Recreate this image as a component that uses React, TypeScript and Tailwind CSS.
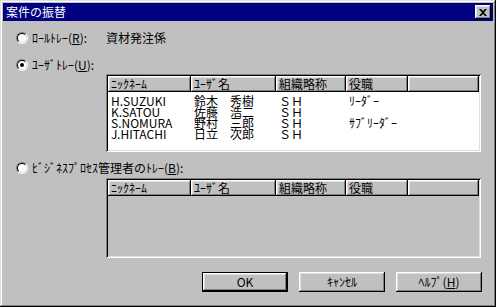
import { ReactNode } from 'react'

const raised =
  'shadow-[inset_-1px_-1px_#000,inset_1px_1px_#fff,inset_-2px_-2px_#808080,inset_2px_2px_#dfdfdf]'
const sunken =
  'shadow-[inset_1px_1px_#808080,inset_-1px_-1px_#fff,inset_2px_2px_#000,inset_-2px_-2px_#dfdfdf]'

const columns = [
  { label: 'ﾆｯｸﾈｰﾑ', w: 'w-[83px]' },
  { label: 'ﾕｰｻﾞ名', w: 'w-[85px]' },
  { label: '組織略称', w: 'w-[70px]' },
  { label: '役職', w: 'w-[62px]' },
]

const users = [
  ['H.SUZUKI', '鈴木　秀樹', 'ＳＨ', 'ﾘｰﾀﾞｰ'],
  ['K.SATOU', '佐藤　浩二', 'ＳＨ', ''],
  ['S.NOMURA', '野村　三郎', 'ＳＨ', 'ｻﾌﾞﾘｰﾀﾞｰ'],
  ['J.HITACHI', '日立　次郎', 'ＳＨ', ''],
]

function Radio({ checked }: { checked?: boolean }) {
  return (
    <span className="w-[12px] h-[12px] shrink-0 rounded-full border border-[#808080] border-b-white border-r-white flex">
      <span className="flex-1 rounded-full border border-black border-b-[#dfdfdf] border-r-[#dfdfdf] bg-white flex items-center justify-center">
        {checked && <span className="w-[4px] h-[4px] rounded-full bg-black" />}
      </span>
    </span>
  )
}

function Key({ children }: { children: ReactNode }) {
  return <span className="underline underline-offset-[1px]">{children}</span>
}

function ListView({ rows, white }: { rows: string[][]; white?: boolean }) {
  return (
    <div className={`${sunken} p-[2px] h-full flex flex-col ${white ? 'bg-white' : 'bg-[#c0c0c0]'}`}>
      {/* Header */}
      <div className="flex h-[16px] shrink-0 bg-[#c0c0c0]">
        {columns.map((c) => (
          <div key={c.label} className={`${c.w} ${raised} pl-[3px] leading-[15px] shrink-0 whitespace-nowrap`}>
            {c.label}
          </div>
        ))}
        <div className={`flex-1 ${raised}`} />
      </div>
      {/* Rows */}
      <div className="pt-[3px]">
        {rows.map((r) => (
          <div key={r[0]} className="flex h-[11px] leading-[11px]">
            {r.map((cell, i) => (
              <div key={i} className={`${columns[i].w} pl-[3px] shrink-0 whitespace-nowrap`}>
                {cell}
              </div>
            ))}
          </div>
        ))}
      </div>
    </div>
  )
}

function Button({ children, primary }: { children: ReactNode; primary?: boolean }) {
  return (
    <div className={`w-[86px] h-[20px] ${primary ? 'border border-black' : ''} flex`}>
      <div className={`flex-1 ${raised} flex items-center justify-center leading-none`}>{children}</div>
    </div>
  )
}

export default function App() {
  return (
    <div className="w-[496px] h-[307px] bg-[#c0c0c0] p-[3px] flex flex-col text-[12px] text-black font-['Noto_Sans_CJK_JP','Noto_Sans',sans-serif] shadow-[inset_-1px_-1px_#000,inset_1px_1px_#dfdfdf,inset_-2px_-2px_#808080,inset_2px_2px_#fff]">
      {/* Title bar */}
      <div className="h-[18px] bg-[#000080] flex items-center justify-between pl-[3px] pr-[2px]">
        <span className="text-white leading-none">案件の振替</span>
        <div className={`w-[16px] h-[14px] bg-[#c0c0c0] ${raised} flex items-center justify-center`}>
          <svg width="8" height="7" viewBox="0 0 8 7">
            <path d="M0 0h2l2 2 2-2h2L5 3.5 8 7H6L4 5 2 7H0l3-3.5z" fill="#000" />
          </svg>
        </div>
      </div>

      {/* Body */}
      <div className="flex-1 flex flex-col pl-[13px] pr-[12px]">
        <div className="mt-[11px] h-[12px] flex items-center">
          <Radio />
          <span className="ml-[4px] w-[74px] leading-none whitespace-nowrap">
            ﾛｰﾙﾄﾚｰ(<Key>R</Key>):
          </span>
          <span className="leading-none">資材発注係</span>
        </div>

        <div className="mt-[15px] h-[12px] flex items-center">
          <Radio checked />
          <span className="ml-[4px] leading-none whitespace-nowrap">
            ﾕｰｻﾞﾄﾚｰ(<Key>U</Key>):
          </span>
        </div>
        <div className="mt-[3px] ml-[90px] h-[78px]">
          <ListView rows={users} white />
        </div>

        <div className="mt-[10px] h-[12px] flex items-center">
          <Radio />
          <span className="ml-[4px] leading-none whitespace-nowrap">
            ﾋﾞｼﾞﾈｽﾌﾟﾛｾｽ管理者のﾄﾚｰ(<Key>B</Key>):
          </span>
        </div>
        <div className="mt-[4px] ml-[90px] h-[80px]">
          <ListView rows={[]} />
        </div>

        <div className="mt-[14px] flex justify-end gap-[11px] -mr-[1px]">
          <Button primary>OK</Button>
          <Button>ｷｬﾝｾﾙ</Button>
          <Button>
            ﾍﾙﾌﾟ(<Key>H</Key>)
          </Button>
        </div>
      </div>
    </div>
  )
}
